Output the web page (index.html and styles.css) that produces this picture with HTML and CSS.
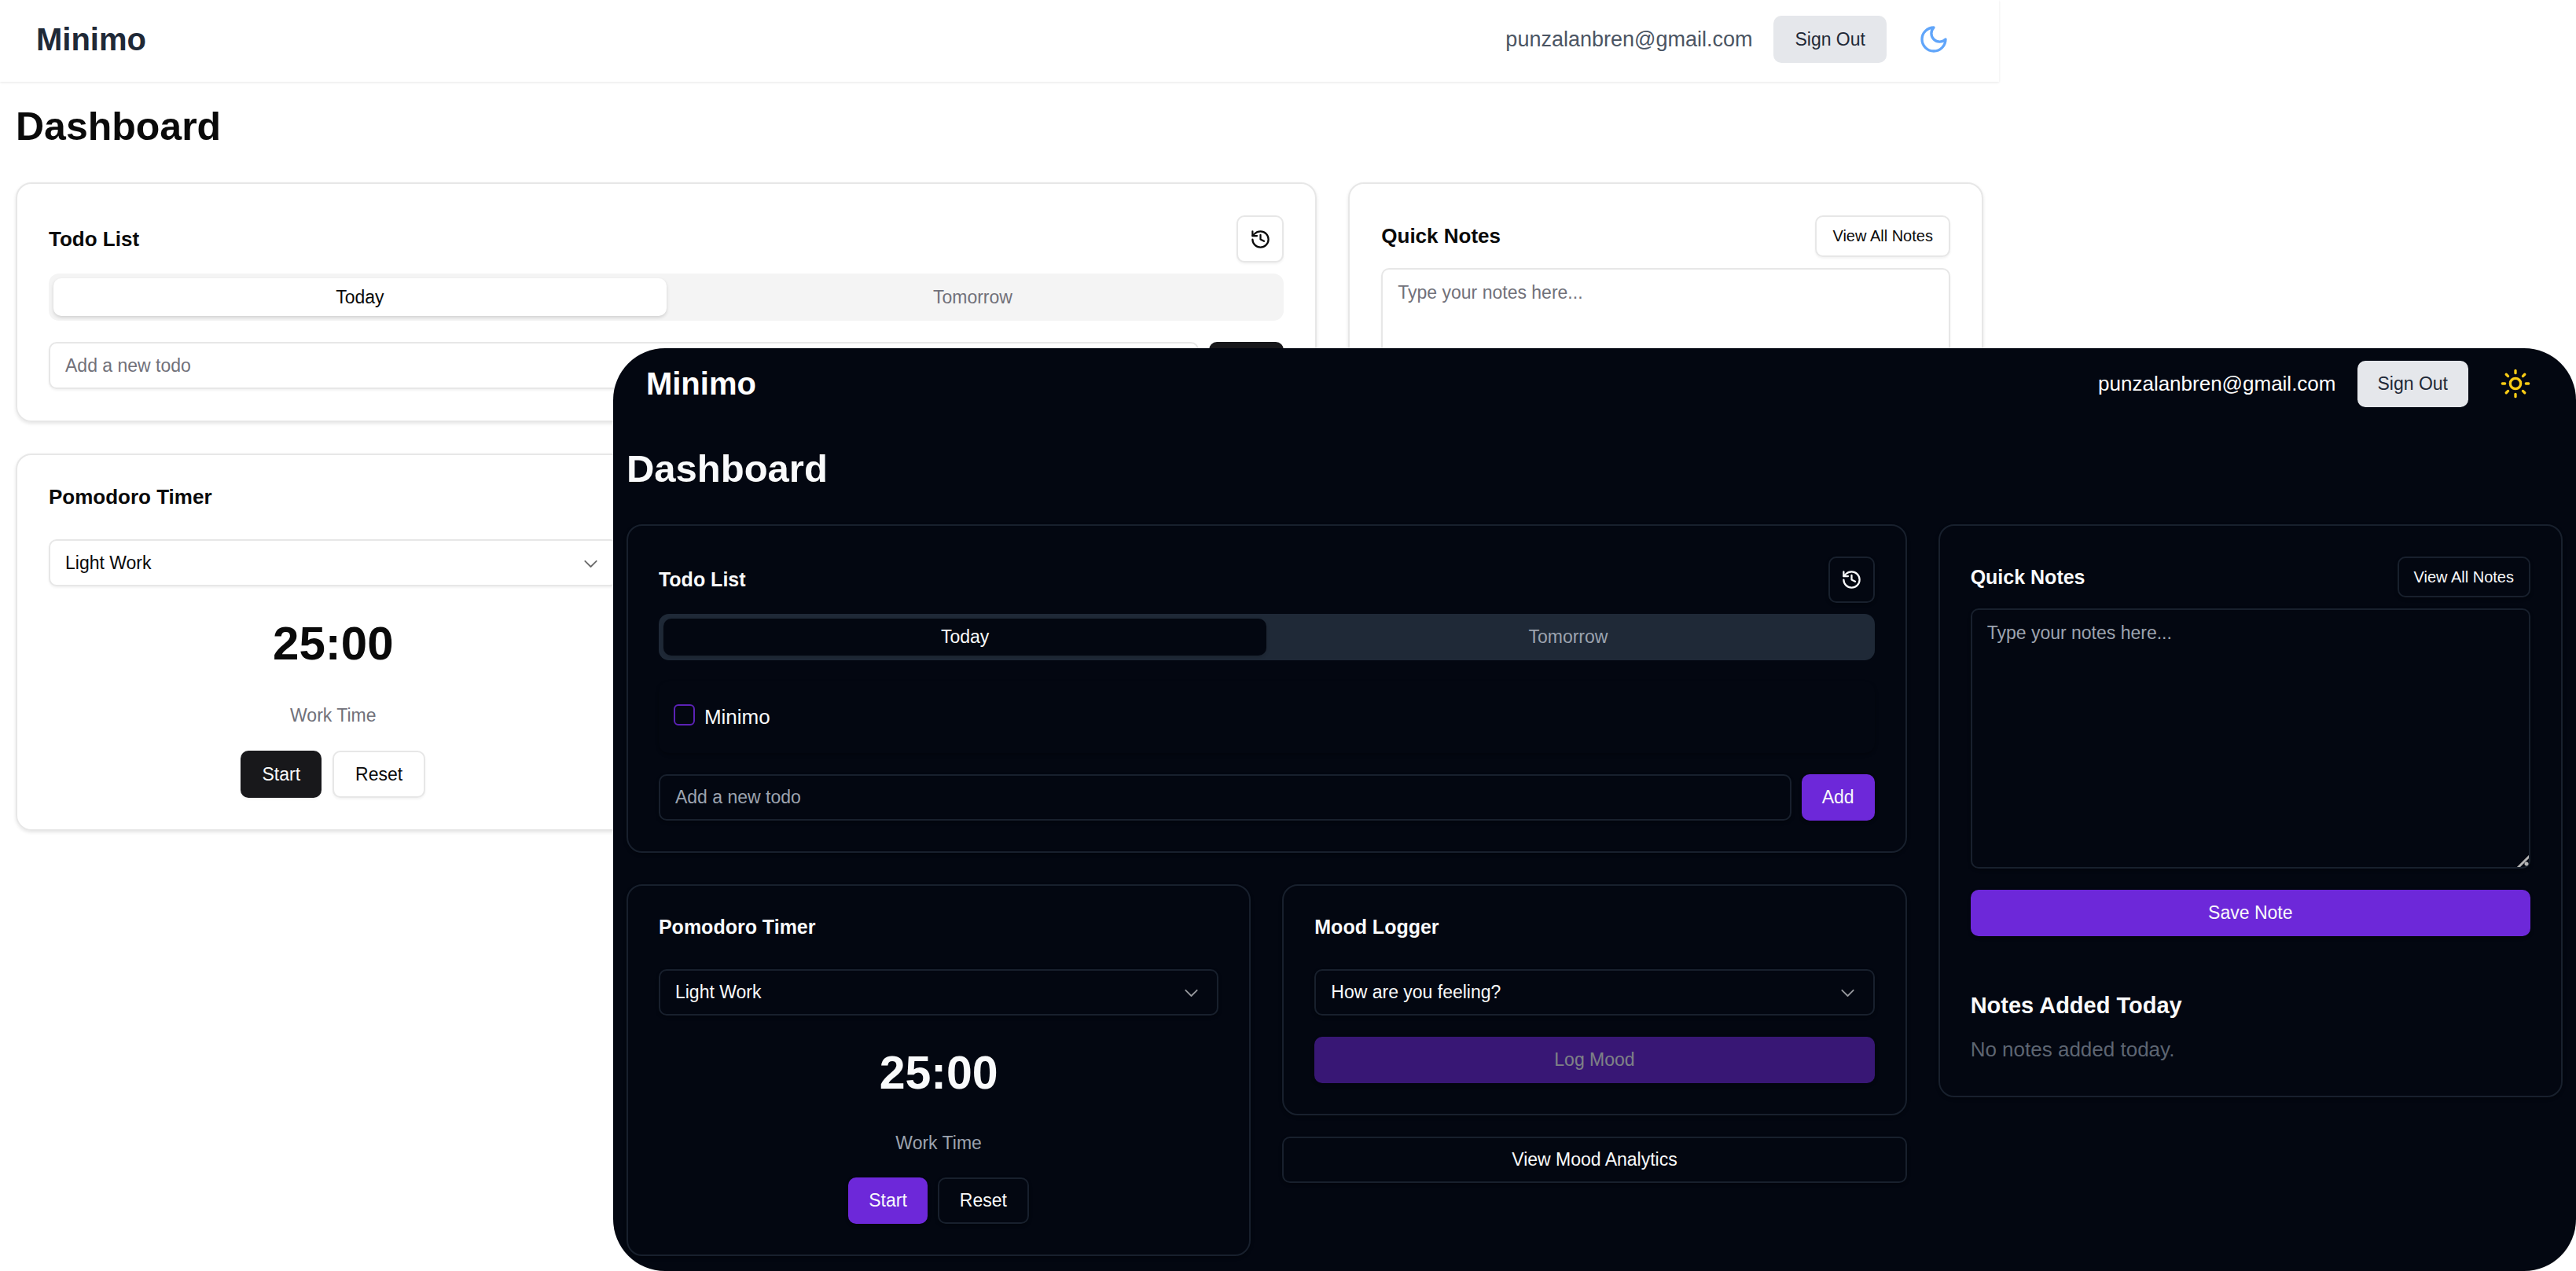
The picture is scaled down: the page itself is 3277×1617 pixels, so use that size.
FILE: index.html
```html
<!DOCTYPE html>
<html lang="en">
<head>
<meta charset="utf-8">
<meta name="viewport" content="width=device-width, initial-scale=1">
<title>Minimo</title>
<link rel="stylesheet" href="styles.css">
</head>
<body>
<svg class="sprite" aria-hidden="true">
  <symbol id="history" viewBox="0 0 24 24"><path d="M3 12a9 9 0 1 0 9-9 9.750 9.750 0 0 0-6.740 2.740L3 8"/><path d="M3 3v5h5"/><path d="M12 7v5l4 2"/></symbol>
  <symbol id="chevron" viewBox="0 0 15 15"><path d="M3.500 6 7.500 10l4-4"/></symbol>
</svg>
<div class="stage">
  <section class="screen light" aria-label="Light theme">
    <header class="topbar">
      <span class="brand">Minimo</span>
      <div class="account">
        <span class="email">punzalanbren@gmail.com</span>
        <button class="btn signout" type="button">Sign Out</button>
        <button class="theme-toggle" type="button" aria-label="Dark theme">
          <svg viewBox="0 0 24 24"><path d="M12 3a6 6 0 0 0 9 9 9 9 0 1 1-9-9Z"/></svg>
        </button>
      </div>
    </header>
    <main class="content">
      <h1>Dashboard</h1>
      <div class="board">
        <div class="main-col">
          <article class="card">
            <div class="card-head">
              <h2>Todo List</h2>
              <button class="btn outline square" type="button" aria-label="History"><svg><use href="#history"/></svg></button>
            </div>
            <div class="tabs" role="tablist">
              <button class="tab active" type="button" role="tab" aria-selected="true">Today</button>
              <button class="tab" type="button" role="tab" aria-selected="false">Tomorrow</button>
            </div>
            <form class="add-row">
              <input class="field" type="text" placeholder="Add a new todo" aria-label="Add a new todo">
              <button class="btn primary" type="button">Add</button>
            </form>
          </article>
          <div class="pair">
            <article class="card">
              <h2>Pomodoro Timer</h2>
              <div class="select">
                <select class="field" aria-label="Work type"><option>Light Work</option></select>
                <svg><use href="#chevron"/></svg>
              </div>
              <div class="timer">25:00</div>
              <p class="phase">Work Time</p>
              <div class="actions">
                <button class="btn primary" type="button">Start</button>
                <button class="btn outline" type="button">Reset</button>
              </div>
            </article>
          </div>
        </div>
        <div class="side-col">
          <article class="card">
            <div class="card-head">
              <h2>Quick Notes</h2>
              <button class="btn outline small" type="button">View All Notes</button>
            </div>
            <textarea class="field notes" placeholder="Type your notes here..." aria-label="Note"></textarea>
          </article>
        </div>
      </div>
    </main>
  </section>

  <section class="screen dark" aria-label="Dark theme">
    <header class="topbar">
      <span class="brand">Minimo</span>
      <div class="account">
        <span class="email">punzalanbren@gmail.com</span>
        <button class="btn signout" type="button">Sign Out</button>
        <button class="theme-toggle" type="button" aria-label="Light theme">
          <svg viewBox="0 0 24 24"><circle cx="12" cy="12" r="4"/><path d="M12 2v2M12 20v2M4.930 4.930l1.410 1.410M17.660 17.660l1.410 1.410M2 12h2M20 12h2M6.340 17.660l-1.410 1.410M19.070 4.930l-1.410 1.410"/></svg>
        </button>
      </div>
    </header>
    <main class="content">
      <h1>Dashboard</h1>
      <div class="board">
        <div class="main-col">
          <article class="card">
            <div class="card-head">
              <h2>Todo List</h2>
              <button class="btn outline square" type="button" aria-label="History"><svg><use href="#history"/></svg></button>
            </div>
            <div class="tabs" role="tablist">
              <button class="tab active" type="button" role="tab" aria-selected="true">Today</button>
              <button class="tab" type="button" role="tab" aria-selected="false">Tomorrow</button>
            </div>
            <label class="todo"><input type="checkbox"><span>Minimo</span></label>
            <form class="add-row">
              <input class="field" type="text" placeholder="Add a new todo" aria-label="Add a new todo">
              <button class="btn primary" type="button">Add</button>
            </form>
          </article>
          <div class="pair">
            <article class="card">
              <h2>Pomodoro Timer</h2>
              <div class="select">
                <select class="field" aria-label="Work type"><option>Light Work</option></select>
                <svg><use href="#chevron"/></svg>
              </div>
              <div class="timer">25:00</div>
              <p class="phase">Work Time</p>
              <div class="actions">
                <button class="btn primary" type="button">Start</button>
                <button class="btn outline" type="button">Reset</button>
              </div>
            </article>
            <div class="mood">
              <article class="card">
                <h2>Mood Logger</h2>
                <div class="select">
                  <select class="field" aria-label="Mood"><option>How are you feeling?</option></select>
                  <svg><use href="#chevron"/></svg>
                </div>
                <button class="btn primary wide" type="button" disabled>Log Mood</button>
              </article>
              <button class="btn outline" type="button">View Mood Analytics</button>
            </div>
          </div>
        </div>
        <div class="side-col">
          <article class="card">
            <div class="card-head">
              <h2>Quick Notes</h2>
              <button class="btn outline small" type="button">View All Notes</button>
            </div>
            <textarea class="field notes" placeholder="Type your notes here..." aria-label="Note"></textarea>
            <button class="btn primary wide" type="button">Save Note</button>
            <h3>Notes Added Today</h3>
            <p class="empty">No notes added today.</p>
          </article>
        </div>
      </div>
    </main>
  </section>
</div>
</body>
</html>
```
FILE: styles.css
```css
* { box-sizing: border-box; }

body {
  margin: 0;
  background: #fff;
  font-family: "Liberation Sans", Arial, sans-serif;
}

h1, h2, h3, p { margin: 0; }

button, input, select, textarea { font: inherit; color: inherit; margin: 0; }

svg { fill: none; stroke: currentColor; stroke-width: 2; stroke-linecap: round; stroke-linejoin: round; }

.sprite { display: none; }

/* Two screens share one cell; the dark one lies over the light one. */
.stage { display: grid; }

.screen {
  grid-area: 1 / 1;
  background: var(--bg);
  color: var(--fg);
  font-size: 23px;
  line-height: 33px;
}

.light {
  --bg: #fff;
  --fg: #0a0a0a;
  --brand: #1f2937;
  --email: #4b5563;
  --muted: #71717a;
  --border: #e7e7e7;
  --tabs: #f4f4f4;
  --primary: #18181b;
  --on-primary: #fafafa;
  --toggle: #60a5fa;
  --shadow: 0 2px 3px rgba(0, 0, 0, .05);
  --card-shadow: 0 2px 4px rgba(0, 0, 0, .1);
  --control: 60px;
  --small-control: 53px;
  --pad: 40px;
  --edge: 20px;
  --btn-pad: 27px;
  --small-pad: 20px;
  --gap: 14px;
  --phase-gap: 42px;
  --actions-gap: 28px;
  --brand-size: 40px;
  --h1-size: 50px;
  --h2-size: 26px;
  --text-size: 27px;
  --timer-size: 60px;
  width: 77.6%;
}

.dark {
  --bg: #030711;
  --fg: #f9fafb;
  --brand: #fff;
  --email: #fff;
  --muted: #9ca3af;
  --border: #18202d;
  --tabs: #1f2937;
  --primary: #6d28d9;
  --on-primary: #f9fafb;
  --toggle: #facc15;
  --shadow: 0 2px 4px rgba(0, 0, 0, .3);
  --card-shadow: 0 2px 4px rgba(0, 0, 0, .3);
  --control: 59px;
  --small-control: 52px;
  --pad: 39px;
  --edge: 17px;
  --btn-pad: 26px;
  --small-pad: 19px;
  --gap: 13px;
  --phase-gap: 40px;
  --actions-gap: 27px;
  --brand-size: 40px;
  --h1-size: 49px;
  --h2-size: 25px;
  --text-size: 26px;
  --timer-size: 59px;
  width: 76.2%;
  margin-top: 443px;
  justify-self: end;
  border-radius: 66px;
  overflow: hidden;
}

.topbar {
  display: flex;
  align-items: center;
  justify-content: space-between;
  padding: 17px 50px 21px 46px;
  box-shadow: 0 1px 3px rgba(0, 0, 0, .1);
}
.dark .topbar { padding: 12px 44px 18px 42px; box-shadow: none; }

.brand { color: var(--brand); font-size: var(--brand-size); line-height: 46px; font-weight: 700; }

.account { display: flex; align-items: center; gap: 27px; }
.email { color: var(--email); font-size: var(--text-size); line-height: 40px; }

.theme-toggle {
  display: flex;
  padding: 13px;
  border: 0;
  background: none;
  color: var(--toggle);
}
.theme-toggle svg { width: 40px; height: 40px; }

.content { padding: 27px var(--edge) 19px; }
h1 { font-size: var(--h1-size); line-height: 60px; margin-bottom: 41px; }

.board { display: grid; grid-template-columns: repeat(3, minmax(0, 1fr)); gap: 40px; align-items: start; }
.main-col { grid-column: span 2; display: grid; gap: 40px; }
.pair { display: grid; grid-template-columns: repeat(2, minmax(0, 1fr)); gap: 40px; align-items: start; }
.mood { display: grid; gap: 27px; }

.card {
  padding: var(--pad);
  border: 2px solid var(--border);
  border-radius: 20px;
  box-shadow: var(--card-shadow);
}
h2 { font-size: var(--h2-size); line-height: 27px; }
.card-head { display: flex; align-items: center; justify-content: space-between; margin-bottom: 14px; }

.btn {
  height: var(--control);
  padding: 0 var(--btn-pad);
  border: 0;
  border-radius: 10px;
  line-height: 33px;
  box-shadow: var(--shadow);
}
.primary { background: var(--primary); color: var(--on-primary); }
.primary:disabled { opacity: .5; }
.outline { background: var(--bg); border: 2px solid var(--border); }
.signout { background: #e5e7eb; color: #1f2937; box-shadow: none; }
.small { height: var(--small-control); padding: 0 var(--small-pad); font-size: 20px; }
.square { display: grid; place-items: center; width: var(--control); padding: 0; }
.square svg { width: 27px; height: 27px; }
.wide { display: block; width: 100%; }

.tabs {
  display: grid;
  grid-template-columns: 1fr 1fr;
  height: var(--control);
  padding: 6px;
  border-radius: 13px;
  background: var(--tabs);
  margin-bottom: 27px;
}
.tab { border: 0; border-radius: 10px; background: none; color: var(--muted); padding: 0; }
.tab.active { background: var(--bg); color: var(--fg); box-shadow: 0 2px 4px rgba(0, 0, 0, .15); }

.todo {
  display: flex;
  align-items: center;
  gap: 12px;
  padding: 26px 19px;
  margin-bottom: 27px;
  border-radius: 13px;
  box-shadow: 0 2px 4px rgba(0, 0, 0, .3);
  font-size: var(--text-size);
  line-height: 39px;
}
.todo input {
  appearance: none;
  width: 27px;
  height: 27px;
  margin-bottom: 6px;
  border: 2px solid #5b22b5;
  border-radius: 6px;
}

.field {
  width: 100%;
  height: var(--control);
  padding: 0 19px;
  border: 2px solid var(--border);
  border-radius: 10px;
  background: var(--bg);
  box-shadow: var(--shadow);
  outline: 0;
}
.field::placeholder { color: var(--muted); opacity: 1; }

.add-row { display: flex; gap: 13px; }

.select { display: grid; align-items: center; margin-top: 40px; }
.select > * { grid-area: 1 / 1; }
.select select { appearance: none; }
.select svg {
  justify-self: end;
  width: 27px;
  height: 27px;
  margin-right: 21px;
  stroke-width: 1;
  opacity: .6;
  pointer-events: none;
}
.select + .btn { margin-top: 27px; }

.timer { margin-top: 40px; font-size: var(--timer-size); line-height: 66px; font-weight: 700; text-align: center; }
.phase { margin-top: var(--phase-gap); color: var(--muted); text-align: center; }
.actions { display: flex; justify-content: center; gap: var(--gap); margin-top: var(--actions-gap); }

.notes { display: block; height: 331px; padding: 13px 19px; line-height: 33px; }
.notes::-webkit-resizer {
  background:
    radial-gradient(circle at 12px 11px, #b4b4b4 2px, transparent 3px),
    linear-gradient(135deg, transparent 10px, #b4b4b4 11px, #b4b4b4 13px, transparent 14px);
}
.notes + .btn { margin-top: 27px; }

h3 { margin-top: 65px; font-size: 29px; line-height: 46px; }
.empty { margin-top: 14px; color: #5d6572; font-size: var(--text-size); line-height: 39px; }
```
